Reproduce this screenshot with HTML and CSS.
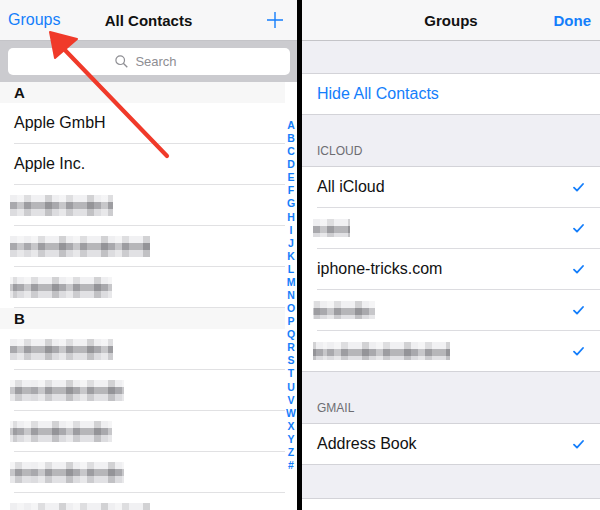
FILE: index.html
```html
<!DOCTYPE html>
<html lang="en">
<head>
    <meta charset="UTF-8">
    <meta name="viewport" content="width=device-width, initial-scale=1.0">
    <title>Contacts - Groups</title>
    <link rel="stylesheet" href="styles.css">
</head>
<body>
    <div class="screen">
        <!-- left phone: all contacts -->
        <div class="pane contacts">
            <div class="navbar">
                <span class="nav-link">Groups</span>
                <span class="nav-title">All Contacts</span>
                <svg class="plus" width="16" height="16" viewBox="0 0 16 16">
                    <path d="M8 0V16M0 8H16" stroke="#147efb" stroke-width="1.4" fill="none"/>
                </svg>
            </div>
            <div class="search-band">
                <div class="search-field">
                    <svg width="13" height="13" viewBox="0 0 13 13">
                        <circle cx="5.2" cy="5.2" r="4.3" stroke="#8e8e93" stroke-width="1.2" fill="none"/>
                        <path d="M8.3 8.3L12.3 12.3" stroke="#8e8e93" stroke-width="1.3"/>
                    </svg>
                    <span>Search</span>
                </div>
            </div>
            <div class="list-wrap">
                <div class="list">
                    <div class="section-head">A</div>
                    <div class="row">Apple GmbH</div>
                    <div class="row">Apple Inc.</div>
                    <div class="row"><div class="mz mz-a"></div></div>
                    <div class="row"><div class="mz mz-b"></div></div>
                    <div class="row"><div class="mz mz-c"></div></div>
                    <div class="section-head">B</div>
                    <div class="row"><div class="mz mz-a"></div></div>
                    <div class="row"><div class="mz mz-d"></div></div>
                    <div class="row"><div class="mz mz-c"></div></div>
                    <div class="row"><div class="mz mz-d"></div></div>
                    <div class="row"><div class="mz mz-b"></div></div>
                </div>
                <div class="index">
                    <span>A</span><span>B</span><span>C</span><span>D</span><span>E</span><span>F</span>
                    <span>G</span><span>H</span><span>I</span><span>J</span><span>K</span><span>L</span>
                    <span>M</span><span>N</span><span>O</span><span>P</span><span>Q</span><span>R</span>
                    <span>S</span><span>T</span><span>U</span><span>V</span><span>W</span><span>X</span>
                    <span>Y</span><span>Z</span><span>#</span>
                </div>
            </div>
        </div>

        <!-- right phone: groups -->
        <div class="pane groups">
            <div class="navbar">
                <span></span>
                <span class="nav-title">Groups</span>
                <span class="nav-done">Done</span>
            </div>
            <div class="gap gap-top"></div>
            <div class="group">
                <div class="cell link">Hide All Contacts</div>
            </div>
            <div class="gap gap-label">ICLOUD</div>
            <div class="group">
                <div class="cell">All iCloud <svg class="check" viewBox="0 0 11 9"><path d="M1 4.6L4 7.6L10 1"/></svg></div>
                <div class="cell"><div class="mz mz-s"></div><svg class="check" viewBox="0 0 11 9"><path d="M1 4.6L4 7.6L10 1"/></svg></div>
                <div class="cell">iphone-tricks.com <svg class="check" viewBox="0 0 11 9"><path d="M1 4.6L4 7.6L10 1"/></svg></div>
                <div class="cell"><div class="mz mz-m"></div><svg class="check" viewBox="0 0 11 9"><path d="M1 4.6L4 7.6L10 1"/></svg></div>
                <div class="cell"><div class="mz mz-l"></div><svg class="check" viewBox="0 0 11 9"><path d="M1 4.6L4 7.6L10 1"/></svg></div>
            </div>
            <div class="gap gap-label">GMAIL</div>
            <div class="group">
                <div class="cell">Address Book <svg class="check" viewBox="0 0 11 9"><path d="M1 4.6L4 7.6L10 1"/></svg></div>
            </div>
            <div class="gap gap-bottom"></div>
            <div class="group">
                <div class="cell"></div>
            </div>
        </div>

        <!-- red annotation arrow pointing at "Groups" -->
        <svg class="arrow" width="200" height="180" viewBox="0 0 200 180">
            <path d="M167 156L62 47" stroke="#f03a2a" stroke-width="4.2" stroke-linecap="round"/>
            <path d="M50 32L55 58L77 39Z" fill="#f03a2a" stroke="#f03a2a" stroke-width="2" stroke-linejoin="round"/>
        </svg>
    </div>
</body>
</html>
```

FILE: styles.css
```css
* {
    box-sizing: border-box;
}
body {
    margin: 0;
    background: #000;
    font-family: "Liberation Sans", Arial, sans-serif;
}
.screen {
    position: relative;
    display: flex;
    gap: 5px;
    width: 600px;
    height: 510px;
    overflow: hidden;
    background: #000;
}
.pane {
    height: 510px;
    overflow: hidden;
    display: flex;
    flex-direction: column;
}
.contacts {
    width: 297px;
    background: #fff;
}
.groups {
    width: 298px;
    background: #efeff4;
}

/* nav bars */
.navbar {
    flex: none;
    height: 41px;
    display: grid;
    grid-template-columns: 1fr auto 1fr;
    align-items: center;
    background: #f7f7f8;
    border-bottom: 1px solid #c4c4c8;
    padding: 0 8px;
}
.nav-link {
    color: #147efb;
    font-size: 16px;
}
.nav-title {
    font-size: 15px;
    font-weight: bold;
    color: #111;
}
.plus {
    display: block;
    justify-self: end;
    margin-right: 6px;
    margin-top: -1px;
}
.groups .navbar {
    padding: 0 9px;
}
.nav-done {
    justify-self: end;
    color: #147efb;
    font-size: 15px;
    font-weight: bold;
}

/* search */
.search-band {
    flex: none;
    height: 41px;
    background: #cbcbcf;
    padding: 7px 7px 0 8px;
}
.search-field {
    height: 27px;
    background: #fff;
    border-radius: 5px;
    display: flex;
    align-items: center;
    justify-content: center;
    gap: 7px;
    color: #8e8e93;
    font-size: 13px;
    padding-right: 6px;
}
.search-field svg {
    display: block;
}

/* contact list */
.list-wrap {
    display: flex;
    flex: 1;
    min-height: 0;
}
.list {
    width: 285px;
    flex: none;
}
.section-head {
    height: 21px;
    background: #f7f7f7;
    padding-left: 14px;
    font-size: 15px;
    font-weight: bold;
    line-height: 21px;
    color: #111;
}
.row {
    height: 41px;
    margin-left: 14px;
    border-bottom: 1px solid #e1e1e3;
    display: flex;
    align-items: center;
    font-size: 16px;
    color: #111;
}
.row .mz {
    margin-left: -4px;
}
.index {
    flex: 1;
    display: flex;
    flex-direction: column;
    align-items: center;
    padding-top: 37px;
    color: #147efb;
    font-size: 10.5px;
    font-weight: bold;
    line-height: 13.08px;
}

/* pixelated names */
.mz {
    height: 21px;
    filter: blur(0.7px);
    background:
        repeating-linear-gradient(90deg, rgba(255,255,255,0) 0 7px, rgba(255,255,255,0.35) 7px 14px, rgba(0,0,0,0.07) 14px 21px, rgba(255,255,255,0.15) 21px 35px, rgba(0,0,0,0.12) 35px 42px),
        linear-gradient(#efeff1 0 7px, #a9a9ad 7px 14px, #dcdcdf 14px 21px);
}
.mz-a { width: 103px; }
.mz-b { width: 140px; background-position: 14px 0, 0 0; }
.mz-c { width: 102px; background-position: 7px 0, 0 0; }
.mz-d { width: 114px; background-position: 21px 0, 0 0; }
.mz-s { width: 37px; height: 18px; }
.mz-m { width: 62px; height: 18px; background-position: 7px 0, 0 0; }
.mz-l { width: 137px; height: 18px; background-position: 14px 0, 0 0; }

/* grouped table */
.gap {
    flex: none;
    background: #efeff4;
}
.gap-top {
    height: 32px;
}
.gap-label {
    height: 52px;
    display: flex;
    align-items: flex-end;
    padding: 0 0 8px 15px;
    font-size: 12px;
    color: #6d6d72;
}
.gap-bottom {
    height: 33px;
}
.group {
    flex: none;
    background: #fff;
    border-top: 1px solid #d3d3d8;
    border-bottom: 1px solid #d3d3d8;
    padding-left: 15px;
}
.group + .gap-label {
    height: 51px;
}
.cell {
    height: 40px;
    display: flex;
    align-items: center;
    justify-content: space-between;
    padding-right: 16px;
    font-size: 16px;
    color: #111;
}
.cell + .cell {
    height: 41px;
    border-top: 1px solid #dcdce0;
}
.cell .mz {
    margin-left: -4px;
}
.cell.link {
    color: #147efb;
}
.check {
    width: 11px;
    height: 9px;
    fill: none;
    stroke: #147efb;
    stroke-width: 1.8;
    stroke-linecap: round;
    stroke-linejoin: round;
}

/* annotation */
.arrow {
    position: absolute;
    left: 0;
    top: 0;
    pointer-events: none;
}
```
